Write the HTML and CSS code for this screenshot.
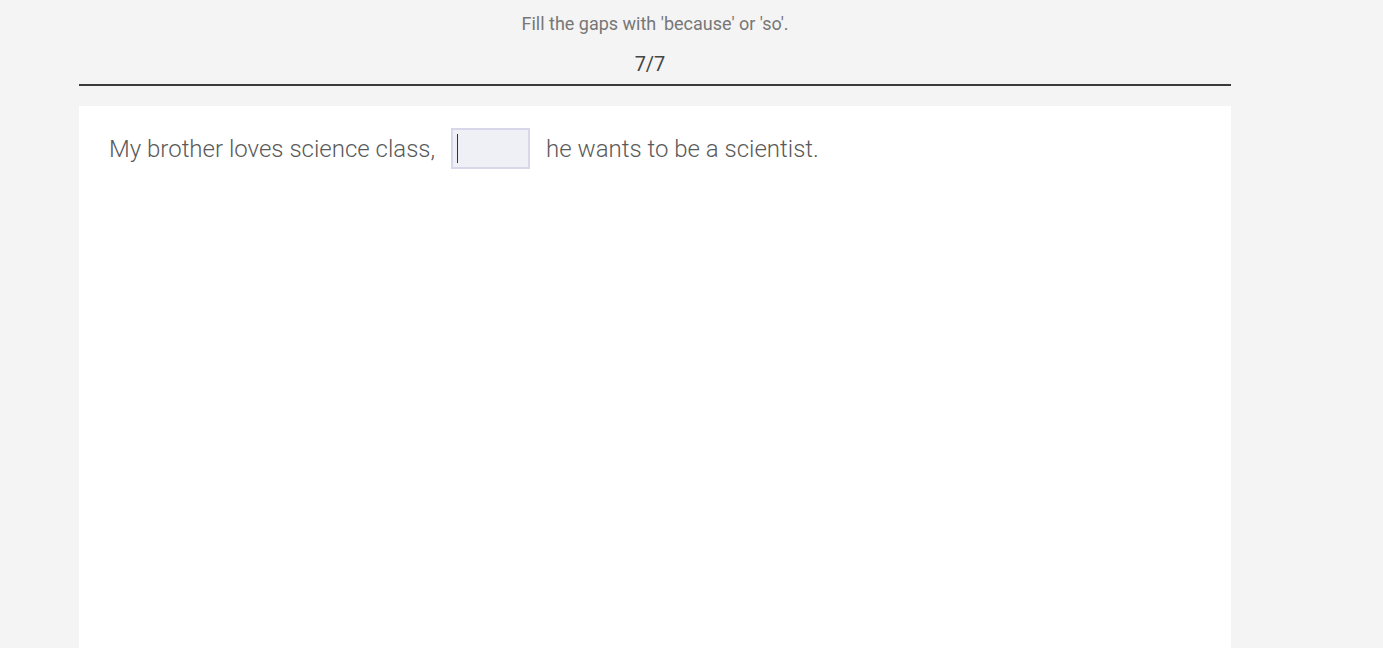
FILE: index.html
```html
<!DOCTYPE html>
<html lang="en">
  <head>
    <meta charset="UTF-8" />
    <meta name="viewport" content="width=device-width, initial-scale=1.0" />
    <title>Because or so</title>
    <link rel="stylesheet" href="styles.css">
  </head>
  <body>
    <div class="page">
      <div class="header">
        <div class="titlu">Fill the gaps with 'because' or 'so'.</div>
        <div class="progres">7/7</div>
      </div>
      <div class="panou">
        <p class="propozitie">
          <span>My brother loves science class,</span>
          <span class="gol"><span class="cursor"></span></span>
          <span>he wants to be a scientist.</span>
        </p>
      </div>
    </div>
  </body>
</html>
```
FILE: styles.css
```css
html,
body {
  margin: 0;
  font-family: Roboto, "Liberation Sans", Arial, sans-serif;
  background-color: #f4f4f4;
}

.page {
  width: 1152px;
  margin-left: 79px;
}

.header {
  text-align: center;
  padding-top: 13px;
  border-bottom: 2px solid #3a3a3a;
}

.titlu {
  font-size: 18px;
  line-height: 22px;
  color: #777;
}

.progres {
  font-size: 20px;
  line-height: 24px;
  color: #444;
  margin-top: 17px;
  padding-bottom: 8px;
  padding-right: 10px;
}

.panou {
  box-sizing: border-box;
  background-color: #fff;
  margin-top: 20px;
  min-height: calc(100vh - 106px);
  padding: 22px 30px;
}

.propozitie {
  margin: 0;
  display: flex;
  align-items: center;
  gap: 16px;
  font-size: 24px;
  font-weight: 300;
  color: #5a5a5a;
}

.gol {
  display: flex;
  align-items: center;
  width: 71px;
  height: 37px;
  background-color: #eef0f6;
  border: 2px solid #d6d8ea;
  padding-left: 4px;
}

.cursor {
  width: 1px;
  height: 29px;
  background-color: #333;
}
```
